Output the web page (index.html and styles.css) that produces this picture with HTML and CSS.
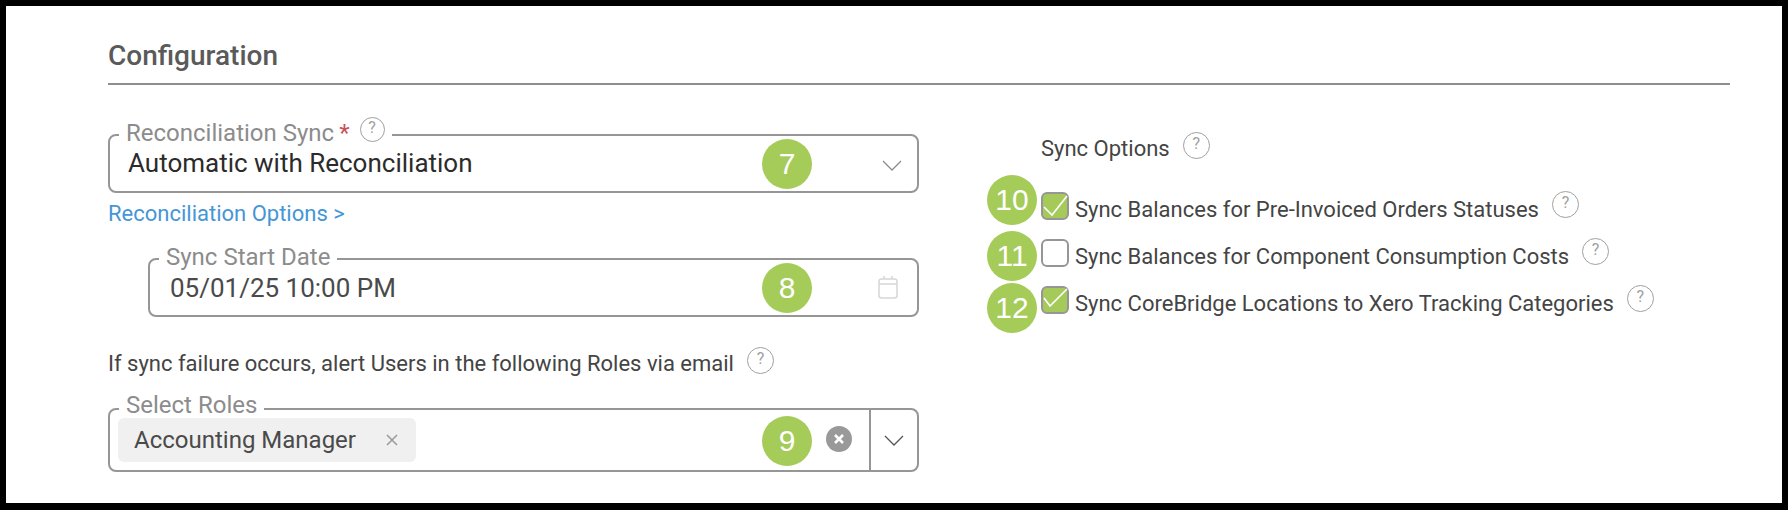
FILE: index.html
```html
<!DOCTYPE html>
<html lang="en">
<head>
<meta charset="utf-8">
<title>Configuration</title>
<link rel="stylesheet" href="styles.css">
</head>
<body>
<main class="frame">
  <h2 class="heading">Configuration</h2>
  <div class="columns">
    <section class="col-left">
      <div class="field">
        <div class="field-label">Reconciliation Sync <span class="star">*</span><span class="help help-label">?</span></div>
        <span class="value value-dark">Automatic with Reconciliation</span>
        <svg class="chevron chevron-gray" viewBox="0 0 20 11"><path d="M1 1l9 9 9-9"/></svg>
        <span class="badge badge-field">7</span>
      </div>
      <a class="link" href="#">Reconciliation Options &gt;</a>
      <div class="field field-date">
        <div class="field-label">Sync Start Date</div>
        <span class="value value-date">05/01/25 10:00 PM</span>
        <svg class="calendar" viewBox="0 0 20 23"><rect x="1" y="3" width="18" height="19" rx="2.5"/><path d="M1 8h18M6 0v3M14 0v3"/></svg>
        <span class="badge badge-field">8</span>
      </div>
      <div class="text-line"><span>If sync failure occurs, alert Users in the following Roles via email</span><span class="help">?</span></div>
      <div class="field field-roles">
        <div class="field-label">Select Roles</div>
        <span class="chip"><span>Accounting Manager</span><svg class="chip-x" viewBox="0 0 12 12"><path d="M1 1l10 10M11 1L1 11"/></svg></span>
        <span class="clear"><svg viewBox="0 0 12 12"><path d="M2 2l8 8M10 2l-8 8"/></svg></span>
        <span class="dropdown"><svg class="chevron" viewBox="0 0 20 11"><path d="M1 1l9 9 9-9"/></svg></span>
        <span class="badge badge-roles">9</span>
      </div>
    </section>
    <section class="col-right">
      <div class="text-line options-title"><span>Sync Options</span><span class="help">?</span></div>
      <div class="check-row">
        <span class="badge badge-check badge-10">10</span>
        <span class="box box-on"><svg viewBox="0 0 28 28"><path d="M3 15l8 8L26 4"/></svg></span>
        <span>Sync Balances for Pre-Invoiced Orders Statuses</span><span class="help">?</span>
      </div>
      <div class="check-row">
        <span class="badge badge-check badge-11">11</span>
        <span class="box"></span>
        <span>Sync Balances for Component Consumption Costs</span><span class="help">?</span>
      </div>
      <div class="check-row">
        <span class="badge badge-check badge-12">12</span>
        <span class="box box-on"><svg viewBox="0 0 28 28"><path d="M3 12l6 8L26 3"/></svg></span>
        <span>Sync CoreBridge Locations to Xero Tracking Categories</span><span class="help">?</span>
      </div>
    </section>
  </div>
</main>
</body>
</html>
```
FILE: styles.css
```css
* { box-sizing: border-box; }
html, body { margin: 0; height: 100%; }
body {
  background: #000;
  padding: 6px 6px 7px 6px;
  font-family: Roboto, "Liberation Sans", sans-serif;
  color: #444;
  font-size: 22px;
}
.frame {
  background: #fff;
  height: 100%;
  padding: 35px 52px 0 102px;
}
.heading {
  margin: 0 0 49px;
  padding-bottom: 12px;
  border-bottom: 2px solid #8e8e8e;
  font-size: 28px;
  font-weight: 500;
  line-height: 30px;
  color: #5a5a5a;
}
.columns { display: grid; grid-template-columns: 811px 1fr; column-gap: 122px; }
.field {
  position: relative;
  display: flex;
  align-items: center;
  height: 59px;
  padding: 0 16px 0 18px;
  border: 2px solid #969696;
  border-radius: 8px;
  background: #fff;
}
.field-label {
  position: absolute;
  top: -15px;
  left: 9px;
  display: flex;
  align-items: center;
  gap: 6px;
  padding: 0 7px;
  height: 24px;
  background: #fff;
  color: #8c8c8c;
  font-size: 24px;
  white-space: nowrap;
}
.star { color: #c9505a; margin-left: -1px; }
.value { flex: 1; font-size: 26px; color: #4a4a4a; }
.value-dark { color: #2b2b2b; padding-bottom: 2px; }
.value-date { padding-left: 2px; }
.chevron { width: 20px; height: 11px; fill: none; stroke: #555; stroke-width: 1.3; }
.chevron-gray { stroke: #8c8c8c; margin-top: 4px; margin-right: -1px; }
.calendar { width: 20px; height: 23px; margin-right: 3px; fill: none; stroke: #d6d6d6; stroke-width: 1.5; }
.link {
  display: block;
  margin-top: 9px;
  color: #4596d6;
  font-size: 22px;
  line-height: 24px;
  text-decoration: none;
}
.field-date { margin: 32px 0 0 40px; }
.text-line { display: flex; align-items: center; gap: 13px; line-height: 30px; }
.col-left .text-line { margin-top: 30px; }
.field-roles { height: 64px; margin-top: 28px; padding: 0 0 0 8px; }
.field-roles .field-label { top: -17px; }
.chip {
  display: flex;
  align-items: center;
  height: 44px;
  width: 298px;
  padding: 0 18px 0 16px;
  border-radius: 6px;
  background: #f0f0f0;
  font-size: 24px;
  color: #4a4a4a;
  justify-content: space-between;
}
.chip-x { width: 12px; height: 12px; fill: none; stroke: #999; stroke-width: 1.5; }
.clear {
  display: flex;
  align-items: center;
  justify-content: center;
  width: 26px;
  height: 26px;
  margin-left: auto;
  margin-right: 17px;
  margin-bottom: 2px;
  border-radius: 50%;
  background: #999;
}
.clear svg { width: 12px; height: 12px; fill: none; stroke: #fff; stroke-width: 2.6; }
.dropdown {
  display: flex;
  align-items: center;
  justify-content: center;
  align-self: stretch;
  width: 48px;
  border-left: 2px solid #969696;
}
.help {
  display: inline-flex;
  align-items: center;
  justify-content: center;
  flex: none;
  width: 27px;
  height: 27px;
  margin-bottom: 6px;
  border: 1.5px solid #a0a0a0;
  border-radius: 50%;
  color: #a0a0a0;
  font-size: 16px;
  line-height: 1;
  padding-bottom: 3px;
}
.help-label { width: 25px; height: 25px; margin: -8px 0 0 4px; }
.col-right { margin-top: -2px; }
.options-title { margin-bottom: 21px; }
.check-row {
  position: relative;
  display: flex;
  align-items: center;
  height: 47px;
  white-space: nowrap;
}
.check-row .help { margin: 0 0 11px 13px; }
.box {
  flex: none;
  width: 28px;
  height: 28px;
  margin: 0 6px 7px 0;
  border: 2px solid #969696;
  border-radius: 6px;
  background: #fff;
}
.box-on { background: #a6ca5a; }
.box svg { display: block; width: 28px; height: 28px; margin: -2px; fill: none; stroke: #fff; stroke-width: 1.6; }
.badge {
  position: absolute;
  display: flex;
  align-items: center;
  justify-content: center;
  width: 50px;
  height: 50px;
  border-radius: 50%;
  background: #a5cb59;
  color: #fff;
  font-family: "Liberation Sans", Arial, sans-serif;
  font-size: 30px;
}
.badge-field { right: 105px; top: 3px; }
.badge-roles { right: 105px; top: 6px; }
.badge-check { left: -54px; }
.badge-10 { top: -11px; }
.badge-11 { top: -2px; }
.badge-12 { top: 3px; }
```
